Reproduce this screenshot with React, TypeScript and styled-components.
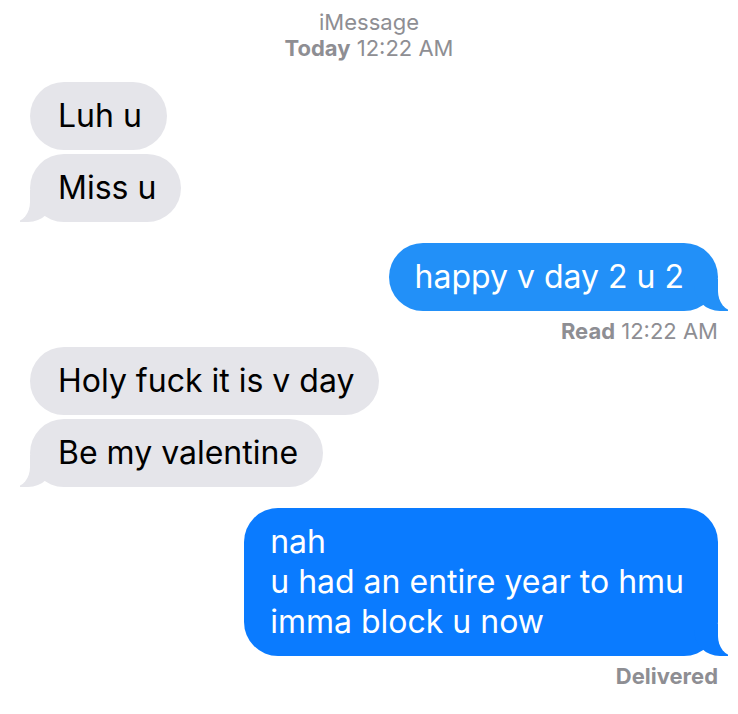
import styled, { createGlobalStyle } from 'styled-components';

const GlobalStyle = createGlobalStyle`
  body {
    margin: 0;
    background: #ffffff;
    font-family: Inter, "Liberation Sans", sans-serif;
    -webkit-font-smoothing: antialiased;
  }
`;

const Screen = styled.div`
  width: 738px;
  min-height: 714px;
  background: #ffffff;
`;

const Header = styled.header`
  padding-top: 9px;
  text-align: center;
  color: #8e8e93;
  font-size: 22px;
  line-height: 26px;
`;

const Thread = styled.div`
  display: flex;
  flex-direction: column;
  padding: 21px 20px 0 30px;
`;

const Group = styled.div<{ $mine: boolean }>`
  display: flex;
  flex-direction: column;
  align-items: ${props => (props.$mine ? 'flex-end' : 'flex-start')};
  gap: 4px;
  margin-bottom: 21px;
`;

const Bubble = styled.div<{ $mine: boolean; $color: string; $tail: boolean }>`
  position: relative;
  max-width: 480px;
  padding: ${props => (props.$mine ? '14px 34px 14px 26px' : '14px 25px 14px 28px')};
  border-radius: 34px;
  background: ${props => props.$color};
  color: ${props => (props.$mine ? '#ffffff' : '#000000')};
  font-size: 32px;
  line-height: 40px;
  white-space: pre-line;

  ${props => props.$tail && `
    &::before {
      content: '';
      position: absolute;
      bottom: 0;
      ${props.$mine ? 'right' : 'left'}: -10px;
      width: 34px;
      height: 32px;
      background: ${props.$color};
      ${props.$mine ? 'border-bottom-left-radius' : 'border-bottom-right-radius'}: 26px 26px;
    }
    &::after {
      content: '';
      position: absolute;
      bottom: 0;
      ${props.$mine ? 'right' : 'left'}: -18px;
      width: 18px;
      height: 34px;
      background: #ffffff;
      ${props.$mine ? 'border-bottom-left-radius' : 'border-bottom-right-radius'}: 16px 20px;
    }
  `}
`;

const Status = styled.div`
  margin-top: 3px;
  margin-bottom: -18px;
  color: #8e8e93;
  font-size: 22px;
  line-height: 26px;
`;

interface Message {
  text: string;
  color?: string;
}

interface ThreadGroup {
  mine: boolean;
  messages: Message[];
  status?: { bold: string; rest?: string };
}

const GRAY = '#e5e5ea';

const groups: ThreadGroup[] = [
  { mine: false, messages: [{ text: 'Luh u' }, { text: 'Miss u' }] },
  {
    mine: true,
    messages: [{ text: 'happy v day 2 u 2', color: '#2290f8' }],
    status: { bold: 'Read', rest: ' 12:22 AM' },
  },
  { mine: false, messages: [{ text: 'Holy fuck it is v day' }, { text: 'Be my valentine' }] },
  {
    mine: true,
    messages: [{ text: 'nah\nu had an entire year to hmu\nimma block u now', color: '#0a7bff' }],
    status: { bold: 'Delivered' },
  },
];

export default function App() {
  return (
    <Screen>
      <GlobalStyle />
      <Header>
        <div>iMessage</div>
        <div>
          <b>Today</b> 12:22 AM
        </div>
      </Header>
      <Thread>
        {groups.map((group, i) => (
          <Group key={i} $mine={group.mine}>
            {group.messages.map((msg, j) => (
              <Bubble
                key={j}
                $mine={group.mine}
                $color={msg.color ?? GRAY}
                $tail={j === group.messages.length - 1}
              >
                {msg.text}
              </Bubble>
            ))}
            {group.status && (
              <Status>
                <b>{group.status.bold}</b>
                {group.status.rest}
              </Status>
            )}
          </Group>
        ))}
      </Thread>
    </Screen>
  );
}
